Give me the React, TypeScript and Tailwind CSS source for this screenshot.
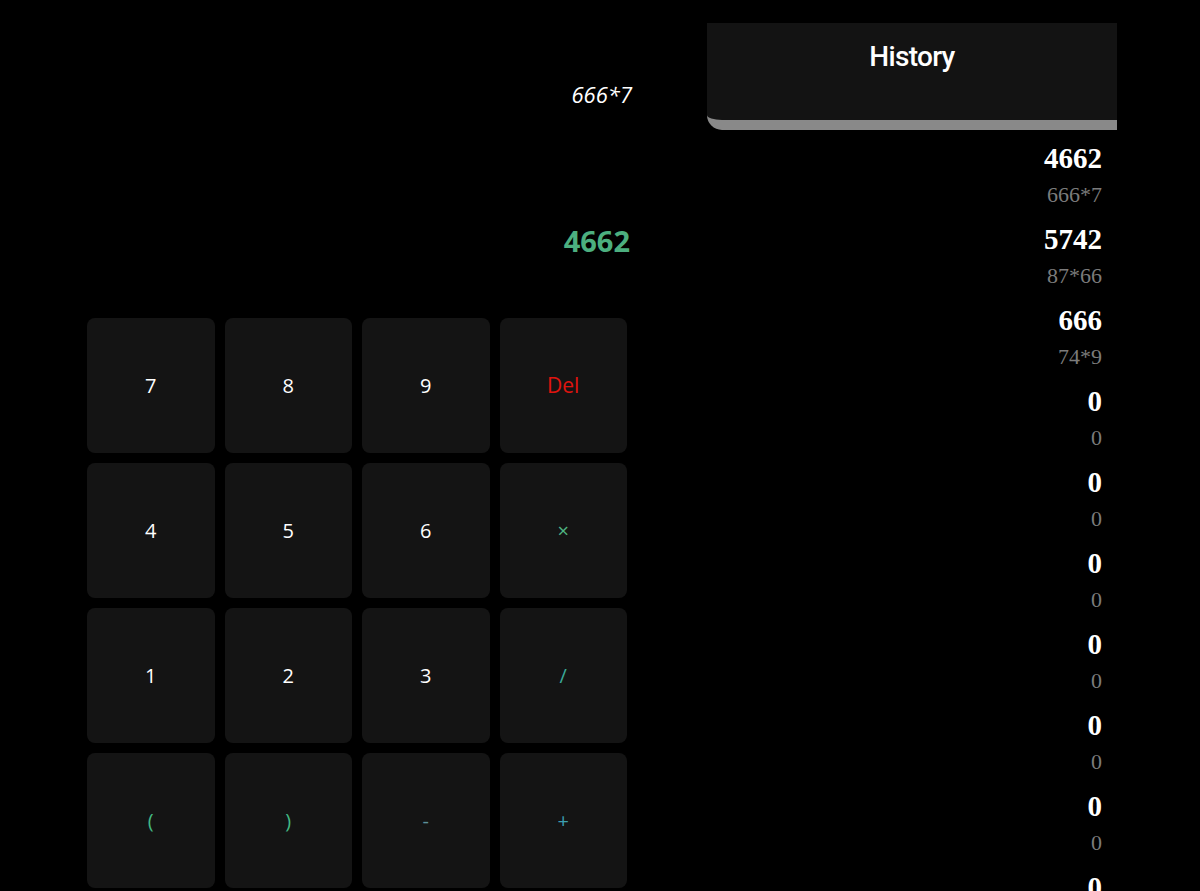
import React from 'react';

const keys = [
  { label: '7', color: 'text-white' },
  { label: '8', color: 'text-white' },
  { label: '9', color: 'text-white' },
  { label: 'Del', color: 'text-[#e0140f] text-[21px]' },
  { label: '4', color: 'text-white' },
  { label: '5', color: 'text-white' },
  { label: '6', color: 'text-white' },
  { label: '×', color: 'text-[#4fb483] text-[17px]' },
  { label: '1', color: 'text-white' },
  { label: '2', color: 'text-white' },
  { label: '3', color: 'text-white' },
  { label: '/', color: 'text-[#3aa898]' },
  { label: '(', color: 'text-[#42b883]' },
  { label: ')', color: 'text-[#42b883]' },
  { label: '-', color: 'text-[#5d8f98]' },
  { label: '+', color: 'text-[#3c9fb0]' },
];

const history = [
  { result: '4662', expr: '666*7' },
  { result: '5742', expr: '87*66' },
  { result: '666', expr: '74*9' },
  { result: '0', expr: '0' },
  { result: '0', expr: '0' },
  { result: '0', expr: '0' },
  { result: '0', expr: '0' },
  { result: '0', expr: '0' },
  { result: '0', expr: '0' },
  { result: '0', expr: '0' },
];

export default function App() {
  return (
    <div className="w-full bg-black overflow-hidden h-[891px]">
      <div className="flex">
        {/* calculator */}
        <div className="w-[540px] ml-[87px] flex flex-col font-['Open_Sans',sans-serif]">
          <div className="h-[318px] flex flex-col items-end mr-[-5px]">
            <div className="mt-[78px] text-[22px] italic text-white leading-[32px]">666*7</div>
            <div className="mt-[111px] text-[29px] font-bold text-[#4caf7f] leading-[40px] mr-[2px]">4662</div>
          </div>
          <div className="grid grid-cols-4 gap-[10px]">
            {keys.map((k, i) => (
              <button
                key={i}
                className={`h-[135px] rounded-[8px] bg-[#141414] flex items-center justify-center text-[20px] ${k.color}`}
              >
                {k.label}
              </button>
            ))}
          </div>
        </div>

        {/* history */}
        <div className="w-[410px] ml-[80px] flex flex-col">
          <div className="mt-[23px] h-[107px] bg-[#131313] border-b-[10px] border-[#898989] rounded-bl-[15px] flex justify-center">
            <h2 className="mt-[14px] text-[28px] font-medium tracking-[-0.7px] text-white font-['Roboto',sans-serif] leading-[40px]">History</h2>
          </div>
          <div className="flex flex-col items-end pr-[15px] mt-[10px] font-['Liberation_Serif',serif]">
            {history.map((h, i) => (
              <div key={i} className="flex flex-col items-end">
                <div className="text-[29px] font-bold text-white leading-[36px]">{h.result}</div>
                <div className="text-[22px] text-[#7b7b7b] leading-[24px] mt-[7px] mb-[14px]">{h.expr}</div>
              </div>
            ))}
          </div>
        </div>
      </div>
    </div>
  );
}
